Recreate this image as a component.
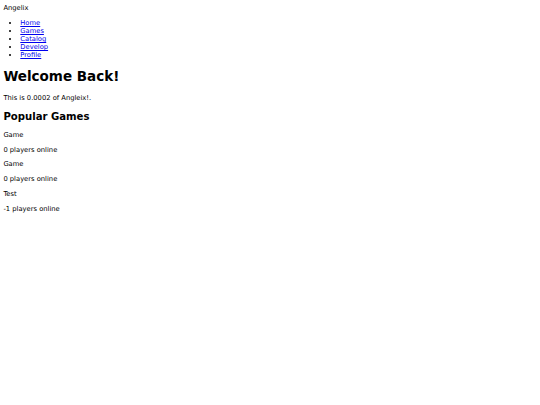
const games = [
  { name: "Game", players: 0 },
  { name: "Game", players: 0 },
  { name: "Test", players: -1 },
];

const links = ["Home", "Games", "Catalog", "Develop", "Profile"];

export default function App() {
  return (
    <div className="mx-[3.4px] mt-[4.4px] font-['DejaVu_Sans',sans-serif] text-[6.75px] leading-[normal] text-black antialiased">
      <div>Angelix</div>
      <ul className="my-[6.75px] list-disc pl-[16.9px]">
        {links.map((l) => (
          <li key={l}>
            <a href="#" className="text-[#0000ee] underline">
              {l}
            </a>
          </li>
        ))}
      </ul>
      <h1 className="mt-[9.05px] mb-[10px] text-[13.5px] font-bold leading-[normal]">Welcome Back!</h1>
      <p className="my-[6.75px]">This is 0.0002 of Angleix!.</p>
      <h2 className="mt-[8.4px] mb-[9.4px] text-[10.125px] font-bold leading-[normal]">Popular Games</h2>
      {games.map((g, i) => (
        <div key={i}>
          <p className="my-[6.75px]">{g.name}</p>
          <p className="my-[6.75px]">{g.players} players online</p>
        </div>
      ))}
    </div>
  );
}
